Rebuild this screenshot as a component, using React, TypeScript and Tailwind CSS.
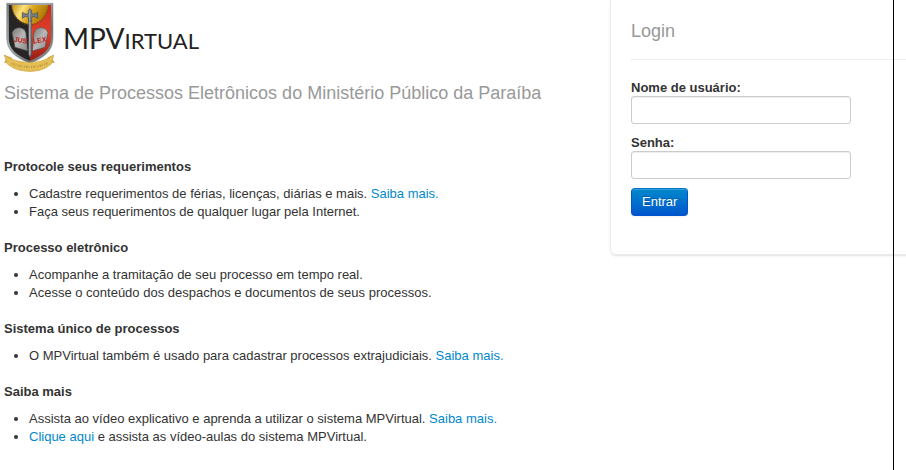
import type { ReactNode } from "react";

const SECTIONS: { title: string; items: ReactNode[] }[] = [
  {
    title: "Protocole seus requerimentos",
    items: [
      <>
        Cadastre requerimentos de férias, licenças, diárias e mais.{" "}
        <TextLink>Saiba mais.</TextLink>
      </>,
      "Faça seus requerimentos de qualquer lugar pela Internet.",
    ],
  },
  {
    title: "Processo eletrônico",
    items: [
      "Acompanhe a tramitação de seu processo em tempo real.",
      "Acesse o conteúdo dos despachos e documentos de seus processos.",
    ],
  },
  {
    title: "Sistema único de processos",
    items: [
      <>
        O MPVirtual também é usado para cadastrar processos extrajudiciais.{" "}
        <TextLink>Saiba mais.</TextLink>
      </>,
    ],
  },
  {
    title: "Saiba mais",
    items: [
      <>
        Assista ao vídeo explicativo e aprenda a utilizar o sistema MPVirtual.{" "}
        <TextLink>Saiba mais.</TextLink>
      </>,
      <>
        <TextLink>Clique aqui</TextLink> e assista as vídeo-aulas do sistema
        MPVirtual.
      </>,
    ],
  },
];

const FIELDS = [
  { id: "username", label: "Nome de usuário:", type: "text" },
  { id: "password", label: "Senha:", type: "password" },
];

function TextLink({ children }: { children: ReactNode }) {
  return (
    <a href="#" className="text-[#0088cc] hover:underline">
      {children}
    </a>
  );
}

function Crest() {
  return (
    <svg viewBox="0 0 180 228" className="h-[76px] w-[60px] shrink-0" aria-hidden="true">
      <defs>
        <linearGradient id="silver" x1="0" y1="0" x2="1" y2="1">
          <stop offset="0" stopColor="#7a8082" />
          <stop offset="0.4" stopColor="#a9adad" />
          <stop offset="0.7" stopColor="#6b6b6b" />
          <stop offset="1" stopColor="#a5a5a5" />
        </linearGradient>
        <linearGradient id="gold" x1="0" y1="0" x2="1" y2="0.3">
          <stop offset="0" stopColor="#b8860f" />
          <stop offset="0.35" stopColor="#fbe27a" />
          <stop offset="0.6" stopColor="#dca51c" />
          <stop offset="1" stopColor="#a8740a" />
        </linearGradient>
        <linearGradient id="red" x1="0" y1="0" x2="0" y2="1">
          <stop offset="0" stopColor="#c92a1c" />
          <stop offset="0.5" stopColor="#e0402c" />
          <stop offset="1" stopColor="#8f1710" />
        </linearGradient>
        <linearGradient id="stone" x1="0" y1="0" x2="1" y2="1">
          <stop offset="0" stopColor="#777777" />
          <stop offset="0.5" stopColor="#b9b7b5" />
          <stop offset="1" stopColor="#878583" />
        </linearGradient>
        <clipPath id="shield">
          <path d="M26 15H153V112C153 149 128 167 90 182C51 167 26 149 26 112Z" />
        </clipPath>
      </defs>
      {/* Shield */}
      <path
        d="M20 10H159V114C159 153 133 173 90 190C47 173 20 153 20 114Z"
        fill="url(#silver)"
        stroke="#83898a"
        strokeWidth="1.5"
      />
      <g clipPath="url(#shield)">
        <path d="M20 10H90V192H20Z" fill="#262424" />
        <path d="M90 10H160V192H90Z" fill="url(#red)" />
        <path d="M34 10H146C144 46 121 72 90 72S36 46 34 10Z" fill="url(#gold)" />
        <path
          d="M35 14C37 48 60 74 90 74S143 48 145 14"
          fill="none"
          stroke="#7a5209"
          strokeWidth="4"
          strokeDasharray="4 4"
        />
      </g>
      {/* Tablets */}
      <path d="M45 142L36 98Q42 83 58 83Q74 84 78 99L83 153Z" fill="url(#stone)" stroke="#444" strokeWidth="2" />
      <path d="M135 142L144 98Q138 83 122 83Q106 84 102 99L97 153Z" fill="url(#stone)" stroke="#555" strokeWidth="2" />
      <g
        className="font-['Liberation_Sans_Narrow','Liberation_Sans',sans-serif] font-bold"
        fill="#bd2015"
        textAnchor="middle"
      >
        <text x="62" y="128" fontSize="21" transform="rotate(10 62 120)">
          JUS
        </text>
        <text x="119" y="128" fontSize="21" transform="rotate(-10 119 120)">
          LEX
        </text>
      </g>
      {/* Sword */}
      <path d="M86 60H94V162L90 172L86 162Z" fill="#8a9194" stroke="#4d5356" strokeWidth="2" />
      <path
        d="M85 32L90 26L95 32V41L104 42L113 37V55L104 50L95 51V64H85V51L76 50L67 55V37L76 42L85 41Z"
        fill="#747e82"
        stroke="#4a5255"
        strokeWidth="2"
      />
      <path d="M89 32V166" stroke="#b9c0c2" strokeWidth="2" />
      {/* Ribbon */}
      <path d="M13 165L35 173L38 190L24 187L12 189L19 178Z" fill="#c99b2c" />
      <path d="M161 165L142 173L140 190L153 187L165 189L157 178Z" fill="#c99b2c" />
      <path
        d="M13 165Q36 180 57 184Q90 192 121 184Q142 178 161 165L154 192Q138 206 119 211Q90 218 60 211Q38 206 22 192Z"
        fill="#e4bf55"
        stroke="#cfa540"
        strokeWidth="2"
      />
      <path
        d="M34 190Q57 200 90 201Q122 200 145 188"
        fill="none"
        stroke="#c79f40"
        strokeWidth="7"
        strokeDasharray="3 3 5 3 2 4"
      />
    </svg>
  );
}

function LoginPanel() {
  return (
    <section className="w-[297px] shrink-0 self-start overflow-hidden pb-1 pl-px">
      <div className="-mr-4 rounded-bl-md border-b border-l border-[#ededed] pt-[18px] pr-4 pb-[38px] pl-5 shadow-[0_1px_2px_rgba(0,0,0,0.12)]">
        <h2 className="-mr-4 mb-[18px] border-b border-[#eeeeee] pb-[14px] text-[18px] leading-[27px] text-[#999999]">
          Login
        </h2>
        <form onSubmit={(e) => e.preventDefault()}>
          {FIELDS.map((field) => (
            <div key={field.id} className="mb-[9px]">
              <label htmlFor={field.id} className="block h-[18px] leading-5 font-bold">
                {field.label}
              </label>
              <input
                id={field.id}
                type={field.type}
                className="block h-7 w-[220px] rounded-[3px] border border-[#cccccc] bg-white px-1 shadow-[inset_0_1px_1px_rgba(0,0,0,0.075)] outline-none focus:border-[#52a8ec]"
              />
            </div>
          ))}
          <button
            type="submit"
            className="block h-7 rounded border border-[#0055cc] border-t-[#0074cc] bg-linear-to-b from-[#0088cc] to-[#0055cc] px-[10px] leading-5 text-white shadow-[inset_0_1px_0_rgba(255,255,255,0.2),0_1px_2px_rgba(0,0,0,0.05)] [text-shadow:0_-1px_0_rgba(0,0,0,0.25)]"
          >
            Entrar
          </button>
        </form>
      </div>
    </section>
  );
}

export default function App() {
  return (
    <div className="relative flex min-h-screen overflow-hidden bg-white font-['Liberation_Sans',Arial,sans-serif] text-[13px] leading-[18px] text-[#333333]">
      <main className="min-w-0 flex-1 pr-4 pl-1">
        <header className="mb-[51px]">
          <div className="-ml-1 flex h-20 items-start">
            <Crest />
            <h1 className="pt-5 pl-[3px] font-['Lato',sans-serif] text-[28px] leading-9 text-[#222222]">
              MPV<span className="text-[22px] uppercase">irtual</span>
            </h1>
          </div>
          <p className="text-[18px] leading-[27px] text-[#999999]">
            Sistema de Processos Eletrônicos do Ministério Público da Paraíba
          </p>
        </header>
        {SECTIONS.map((section) => (
          <section key={section.title} className="mb-[18px]">
            <h2 className="mb-[9px] font-bold">{section.title}</h2>
            <ul className="list-disc pl-[25px]">
              {section.items.map((item, i) => (
                <li key={i}>{item}</li>
              ))}
            </ul>
          </section>
        ))}
      </main>
      <LoginPanel />
      {/* Page edge rule, drawn over the panel */}
      <div className="pointer-events-none absolute inset-y-0 right-3 w-px bg-black" />
    </div>
  );
}
